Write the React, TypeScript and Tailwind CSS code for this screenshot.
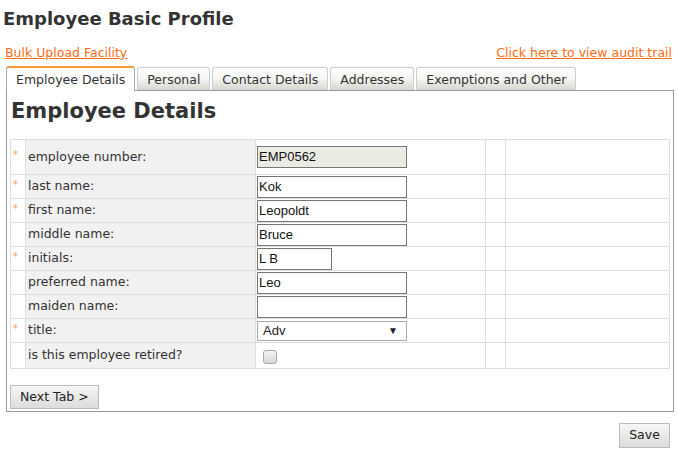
import { FC } from "react";

const font = "font-['DejaVu_Sans',Verdana,sans-serif]";
const inputFont = "font-['Liberation_Sans',Arial,sans-serif]";

type Row = {
	label: string;
	required: boolean;
	kind: "text" | "readonly" | "short" | "select" | "check";
	value?: string;
};

const rows: Row[] = [
	{ label: "employee number:", required: true, kind: "readonly", value: "EMP0562" },
	{ label: "last name:", required: true, kind: "text", value: "Kok" },
	{ label: "first name:", required: true, kind: "text", value: "Leopoldt" },
	{ label: "middle name:", required: false, kind: "text", value: "Bruce" },
	{ label: "initials:", required: true, kind: "short", value: "L B" },
	{ label: "preferred name:", required: false, kind: "text", value: "Leo" },
	{ label: "maiden name:", required: false, kind: "text", value: "" },
	{ label: "title:", required: true, kind: "select", value: "Adv" },
	{ label: "is this employee retired?", required: false, kind: "check" },
];

const tabs = ["Employee Details", "Personal", "Contact Details", "Addresses", "Exemptions and Other"];

const Field: FC<{ row: Row }> = ({ row }) => {
	if (row.kind === "check") {
		return (
			<div className="ml-[6px] mt-[3px] h-[14px] w-[14px] rounded-[3px] border border-[#a9a9a9] bg-gradient-to-b from-[#f4f4f4] to-[#d8d8d8]" />
		);
	}
	if (row.kind === "select") {
		return (
			<div className={`flex h-[20px] w-[150px] items-center justify-between border border-[#aaa] bg-white pl-[5px] pr-[8px] text-[13px] text-[#222] ${inputFont}`}>
				<span>{row.value}</span>
				<span className="text-[10px]">▼</span>
			</div>
		);
	}
	return (
		<div
			className={`flex h-[22px] items-center border border-[#767676] pl-[1px] text-[13px] text-[#111] ${inputFont} ${
				row.kind === "short" ? "w-[75px]" : "w-[150px]"
			} ${row.kind === "readonly" ? "bg-[#ebebe4]" : "bg-white"}`}
		>
			{row.value}
		</div>
	);
};

const App: FC = () => {
	return (
		<div className={`h-[453px] w-[678px] bg-white text-[#333] ${font}`}>
			<div className="pl-[3px] pt-[7px] text-[18px] font-bold leading-[24px] text-[#333]">
				Employee Basic Profile
			</div>
			<div className="mt-[14px] flex justify-between pl-[5px] pr-[6px] text-[12.5px] leading-[16px] text-[#ff6a13] underline">
				<span>Bulk Upload Facility</span>
				<span>Click here to view audit trail</span>
			</div>
			<div className="mt-[5px] flex items-end gap-[2px] pl-[6px]">
				{tabs.map((t, i) =>
					i === 0 ? (
						<div
							key={t}
							className="relative z-10 -mb-px h-[25px] rounded-t-[3px] border border-b-0 border-[#aaa] border-t-2 border-t-[#f39a3a] bg-white px-[9px] pt-[3px] text-[12.5px] leading-[18px] text-[#333]"
						>
							{t}
						</div>
					) : (
						<div
							key={t}
							className="h-[23px] rounded-t-[3px] border border-b-0 border-[#ccc] bg-gradient-to-b from-white via-[#f4f4f2] to-[#d6d6cf] px-[9px] pt-[3px] text-[12.5px] leading-[18px] text-[#333]"
						>
							{t}
						</div>
					)
				)}
			</div>
			<div className="ml-[6px] mr-[4px] h-[322px] border border-[#999] px-[3px]">
				<div className="pl-[1px] pt-[6px] text-[21px] font-bold leading-[28px] text-[#333]">
					Employee Details
				</div>
				<div className="mt-[14px] grid grid-cols-[15px_230px_230px_20px_1fr] border-l border-t border-[#ddd] text-[12.5px] text-[#333]">
					{rows.map((r, i) => {
						const h = i === 0 ? "h-[35px]" : i === rows.length - 1 ? "h-[26px]" : "h-[24px]";
						return (
							<div key={r.label} className="contents">
								<div className={`${h} flex items-center border-b border-r border-[#ddd] pl-[2px] text-[10px] text-[#f7a24a]`}>
									<span className="-mt-[5px]">{r.required ? "*" : ""}</span>
								</div>
								<div className={`${h} flex items-center border-b border-r border-[#ddd] bg-[#f1f1f1] pl-[2px]`}>
									{r.label}
								</div>
								<div className={`${h} flex items-center border-b border-r border-[#ddd] pl-[1px]`}>
									<Field row={r} />
								</div>
								<div className={`${h} border-b border-r border-[#ddd]`} />
								<div className={`${h} border-b border-r border-[#ddd]`} />
							</div>
						);
					})}
				</div>
				<div className="mt-[16px] inline-flex h-[24px] items-center border border-[#bbb] bg-gradient-to-b from-[#f6f6f6] to-[#dcdcdc] px-[9px] text-[12.5px] text-[#222]">
					Next Tab &gt;
				</div>
			</div>
			<div className="mt-[11px] flex justify-end pr-[8px]">
				<div className="flex h-[25px] w-[51px] items-center justify-center border border-[#bbb] bg-gradient-to-b from-[#f6f6f6] to-[#dcdcdc] text-[12.5px] text-[#222]">
					Save
				</div>
			</div>
		</div>
	);
};

export default App;
